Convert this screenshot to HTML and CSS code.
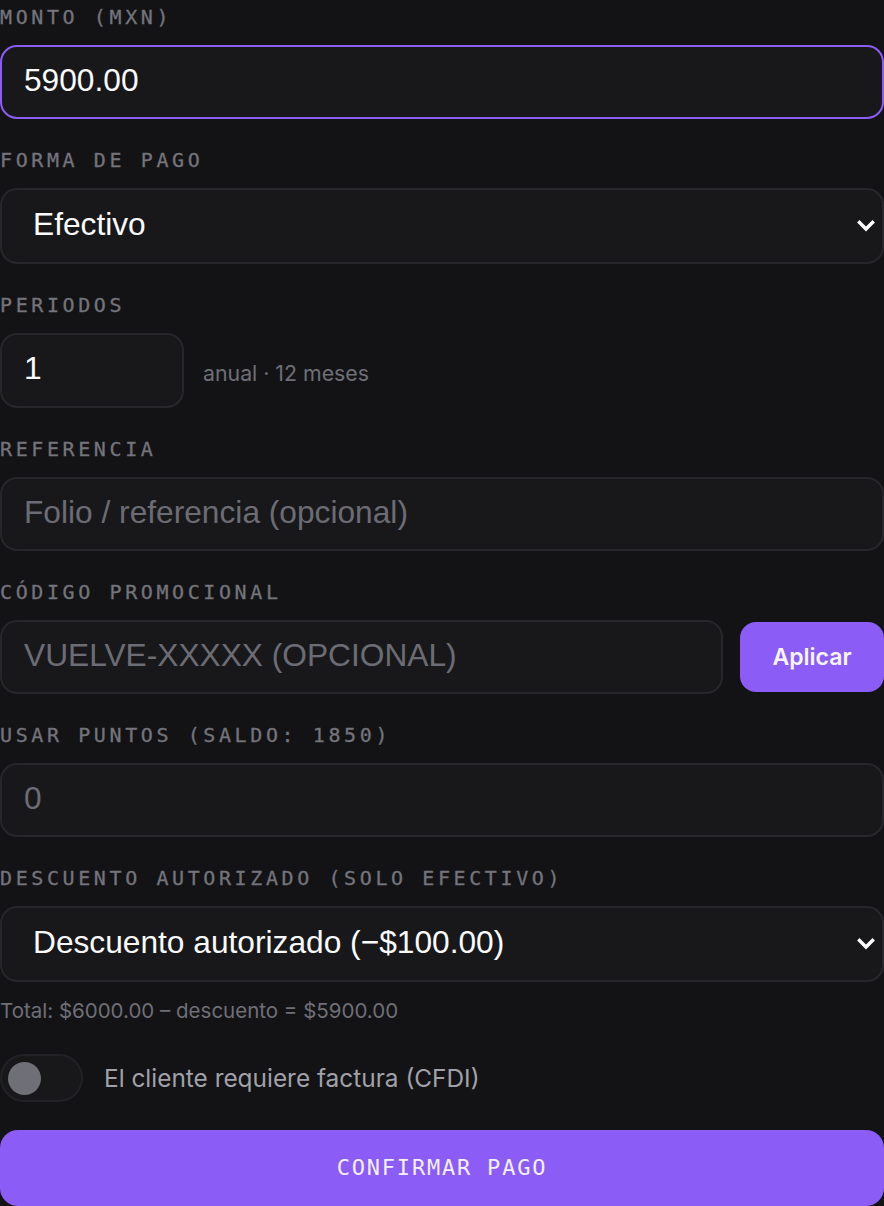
FILE: index.html
```html
<!DOCTYPE html>
<html lang="es">
<head>
<meta charset="utf-8">
<title>Confirmar pago</title>
<link rel="stylesheet" href="styles.css">
</head>
<body>
<form class="pay-form">
  <div class="field">
    <label class="field-label" for="monto">Monto (MXN)</label>
    <input id="monto" class="control control-focus" type="text" value="5900.00">
  </div>

  <div class="field">
    <label class="field-label" for="forma">Forma de pago</label>
    <div class="select-wrap">
      <select id="forma" class="control select">
        <option>Efectivo</option>
        <option>Tarjeta</option>
        <option>Transferencia</option>
      </select>
      <svg class="chevron" viewBox="0 0 18 12" width="18" height="12" aria-hidden="true"><path d="M2.5 2.5 L9 9 L15.5 2.5" fill="none" stroke="#ffffff" stroke-width="3.4" stroke-linecap="square"/></svg>
    </div>
  </div>

  <div class="field">
    <label class="field-label" for="periodos">Periodos</label>
    <div class="row">
      <input id="periodos" class="control control-small" type="text" value="1">
      <span class="hint">anual · 12 meses</span>
    </div>
  </div>

  <div class="field">
    <label class="field-label" for="ref">Referencia</label>
    <input id="ref" class="control" type="text" placeholder="Folio / referencia (opcional)">
  </div>

  <div class="field">
    <label class="field-label" for="promo">Código promocional</label>
    <div class="row row-promo">
      <input id="promo" class="control control-grow" type="text" placeholder="VUELVE-XXXXX (OPCIONAL)">
      <button type="button" class="btn-apply">Aplicar</button>
    </div>
  </div>

  <div class="field">
    <label class="field-label" for="puntos">Usar puntos (saldo: 1850)</label>
    <input id="puntos" class="control" type="text" placeholder="0">
  </div>

  <div class="field">
    <label class="field-label" for="desc">Descuento autorizado (solo efectivo)</label>
    <div class="select-wrap">
      <select id="desc" class="control select">
        <option>Descuento autorizado (−$100.00)</option>
      </select>
      <svg class="chevron" viewBox="0 0 18 12" width="18" height="12" aria-hidden="true"><path d="M2.5 2.5 L9 9 L15.5 2.5" fill="none" stroke="#ffffff" stroke-width="3.4" stroke-linecap="square"/></svg>
    </div>
    <p class="total">Total: $6000.00 – descuento = $5900.00</p>
  </div>

  <label class="toggle-row">
    <span class="toggle"><span class="knob"></span></span>
    <span class="toggle-text">El cliente requiere factura (CFDI)</span>
  </label>

  <button type="button" class="btn-confirm">Confirmar pago</button>
</form>
</body>
</html>
```

FILE: styles.css
```css
html, body {
  margin: 0;
  padding: 0;
  background: #131315;
}

body {
  font-family: "Liberation Sans", Arial, sans-serif;
  color: #fafafa;
  overflow: hidden;
}

.pay-form {
  display: flex;
  flex-direction: column;
  gap: 29px;
  padding-top: 5px;
  width: 884px;
}

.field {
  display: flex;
  flex-direction: column;
}

.field-label {
  display: block;
  font-family: "DejaVu Sans Mono", "Liberation Mono", monospace;
  font-size: 20px;
  line-height: 24px;
  letter-spacing: 3.6px;
  text-transform: uppercase;
  color: #74747c;
  margin-bottom: 16px;
  white-space: nowrap;
  -webkit-text-stroke: 0.3px #74747c;
}

.control {
  box-sizing: border-box;
  height: 74px;
  width: 100%;
  margin: 0;
  padding: 0 22px 4px;
  background: #18181b;
  border: 2px solid #27272b;
  border-radius: 17px;
  color: #fafafa;
  font-family: "Liberation Sans", Arial, sans-serif;
  font-size: 31.7px;
  outline: none;
}

.control::placeholder {
  color: #6c6c74;
  opacity: 1;
}

.control-focus {
  border-color: #8b5cf6;
}

.select-wrap {
  position: relative;
}

.select {
  height: 76px;
  appearance: none;
  -webkit-appearance: none;
  padding-left: 31px;
  padding-right: 50px;
}

.chevron {
  position: absolute;
  right: 9px;
  top: 32px;
  pointer-events: none;
}

.row {
  display: flex;
  align-items: center;
}

.control-small {
  width: 184px;
  height: 75px;
}

.hint {
  margin-left: 19px;
  font-family: Inter, "Noto Sans", sans-serif;
  font-size: 21.3px;
  color: #6f6f77;
  padding-top: 4px;
}

.row-promo {
  gap: 17px;
}

.control-grow {
  flex: 1;
  width: auto;
}

.btn-apply {
  flex: 0 0 144px;
  height: 70px;
  border: 0;
  border-radius: 16px;
  background: #8b5cf6;
  color: #f7f5ff;
  font-family: Inter, "Noto Sans", sans-serif;
  font-weight: 600;
  font-size: 23px;
  padding: 0;
}

.total {
  margin: 17px 0 0;
  font-family: Inter, "Noto Sans", sans-serif;
  font-size: 20.5px;
  line-height: 24px;
  color: #6f6f77;
}

.toggle-row {
  display: flex;
  align-items: center;
  gap: 21px;
  margin-top: 2px;
}

.toggle {
  box-sizing: border-box;
  display: flex;
  align-items: center;
  width: 83px;
  height: 48px;
  padding-left: 6px;
  border: 2px solid #222226;
  border-radius: 24px;
  background: #18181b;
}

.knob {
  width: 33px;
  height: 33px;
  border-radius: 50%;
  background: #6f6f77;
}

.toggle-text {
  font-family: Inter, "Noto Sans", sans-serif;
  font-size: 24.4px;
  color: #a1a1aa;
}

.btn-confirm {
  height: 76px;
  width: 100%;
  margin-top: -1px;
  border: 0;
  border-radius: 18px;
  background: #8b5cf6;
  color: #f3f0ff;
  font-family: "DejaVu Sans Mono", "Liberation Mono", monospace;
  font-size: 22px;
  letter-spacing: 1.8px;
  text-transform: uppercase;
  padding: 0 0 2px;
}
```
